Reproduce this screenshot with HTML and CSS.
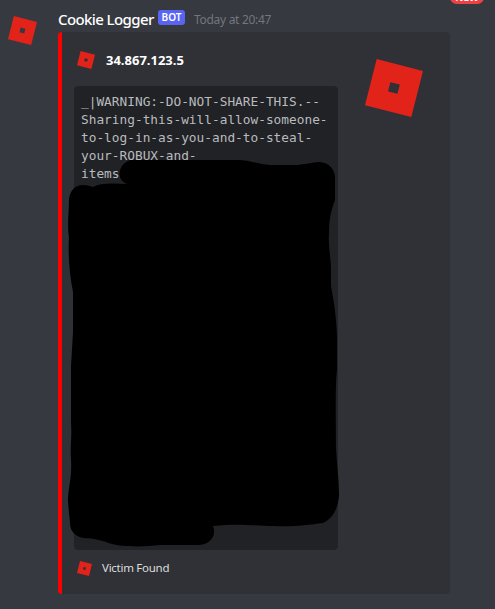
FILE: index.html
```
<!DOCTYPE html>
<html lang="en">
<head>
<meta charset="utf-8">
<title>Chat message</title>
<link rel="stylesheet" href="styles.css">
</head>
<body>
<svg class="defs" aria-hidden="true"><symbol id="logo" viewBox="0 0 58 58"><path fill="#e2231a" fill-rule="evenodd" d="M11.7 0 58 12 46.3 58 0 46.3ZM25.3 23.2 23.1 32.5 32.5 34.8 34.8 25.5Z"/></symbol></svg>
<main class="message">
  <span class="new">NEW</span>
  <svg class="avatar"><use href="#logo"/></svg>
  <div class="content">
    <header class="header">
      <span class="name">Cookie Logger</span>
      <span class="bot">BOT</span>
      <span class="time">Today at 20:47</span>
    </header>
    <article class="embed">
      <div class="details">
        <div class="author"><svg class="author-icon"><use href="#logo"/></svg><span class="ip">34.867.123.5</span></div>
        <div class="code">
          <div>_|WARNING:-DO-NOT-SHARE-THIS.--</div>
          <div>Sharing-this-will-allow-someone-</div>
          <div>to-log-in-as-you-and-to-steal-</div>
          <div>your-ROBUX-and-</div>
          <div>items</div>
          <svg class="scribble" viewBox="64 156 280 394"><path d="M130 160H238C249 160 258 164 270 165H298C307 164 314 162 320 162C330 163 335 170 335 178V200C331 211 329 219 329 232C328 248 331 256 331 270V286C334 302 337 321 337 340V370C335 382 336 430 336 448C337 467 339 479 339 496C338 510 331 520 323 523C309 525 290 527 275 526C255 526 240 523 213 526C217 536 210 545 198 545H160C145 547 122 547 112 544C103 541 94 538 83 538C74 536 70 530 70 523C69 511 68 505 68 498C69 484 72 477 71 459C70 446 72 438 71 423V366L73 332V292C69 272 68 250 69 238C67 223 69 213 69 199C71 186 80 182 93 187C102 182 116 184 128 184C116 181 117 165 130 160Z"/></svg>
        </div>
        <footer class="footer"><svg class="footer-icon"><use href="#logo"/></svg><span class="found">Victim Found</span></footer>
      </div>
      <svg class="thumb"><use href="#logo"/></svg>
    </article>
  </div>
</main>
</body>
</html>
```
FILE: styles.css
```
* { box-sizing: border-box; }
body {
  margin: 0;
  height: 609px;
  overflow: hidden;
  background: #36393f;
  font-family: "Noto Sans", "Open Sans", sans-serif;
  color: #fff;
}
svg { display: block; flex: none; }
.defs { position: absolute; width: 0; height: 0; }
.message {
  position: relative;
  display: flex;
  gap: 21px;
  height: 609px;
  padding: 8px 45px 0 8px;
}
.new {
  position: absolute;
  top: -9px;
  left: 450px;
  width: 34px;
  height: 13px;
  border-radius: 7px;
  background: #ed4245;
  font-size: 10px;
  font-weight: 700;
  line-height: 13px;
  text-align: center;
}
.avatar { width: 29px; height: 29px; margin-top: 8px; }
.content { flex: 1; min-width: 0; }
.header { display: flex; align-items: center; height: 24px; line-height: 22px; white-space: nowrap; }
.name { width: 100px; margin-top: -3px; font-size: 15px; font-weight: 500; letter-spacing: -0.6px; }
.bot {
  width: 27px;
  height: 15px;
  margin-top: -5px;
  border-radius: 3px;
  background: #5865f2;
  font-size: 10px;
  font-weight: 600;
  line-height: 15px;
  text-align: center;
}
.time { margin-left: 9px; color: #72767d; font-size: 12px; letter-spacing: -0.3px; }
.embed {
  display: flex;
  justify-content: space-between;
  width: 392px;
  height: 562px;
  padding: 19px 27px 0 12px;
  border-left: 4px solid #f00;
  border-radius: 4px;
  background: #2f3136;
}
.details { width: 264px; }
.author { display: flex; align-items: center; gap: 11px; height: 18px; padding-left: 3px; }
.author-icon { width: 18px; height: 18px; }
.ip { font-size: 13px; font-weight: 700; line-height: 18px; }
.code {
  position: relative;
  height: 464px;
  margin-top: 17px;
  padding: 6px;
  border: 1px solid #202225;
  border-radius: 4px;
  background: #212226;
  color: #b9bbbe;
  font: 12.8px/18px "DejaVu Sans Mono", monospace;
  white-space: nowrap;
}
.scribble { position: absolute; left: -11px; top: 69px; width: 280px; height: 394px; }
.footer { display: flex; align-items: center; gap: 10px; height: 16px; margin-top: 10px; padding-left: 3px; }
.footer-icon { width: 15px; height: 15px; }
.found { color: #dcddde; font-size: 11.5px; letter-spacing: -0.27px; line-height: 16px; }
.thumb { width: 58px; height: 58px; margin-top: 8px; }
```
